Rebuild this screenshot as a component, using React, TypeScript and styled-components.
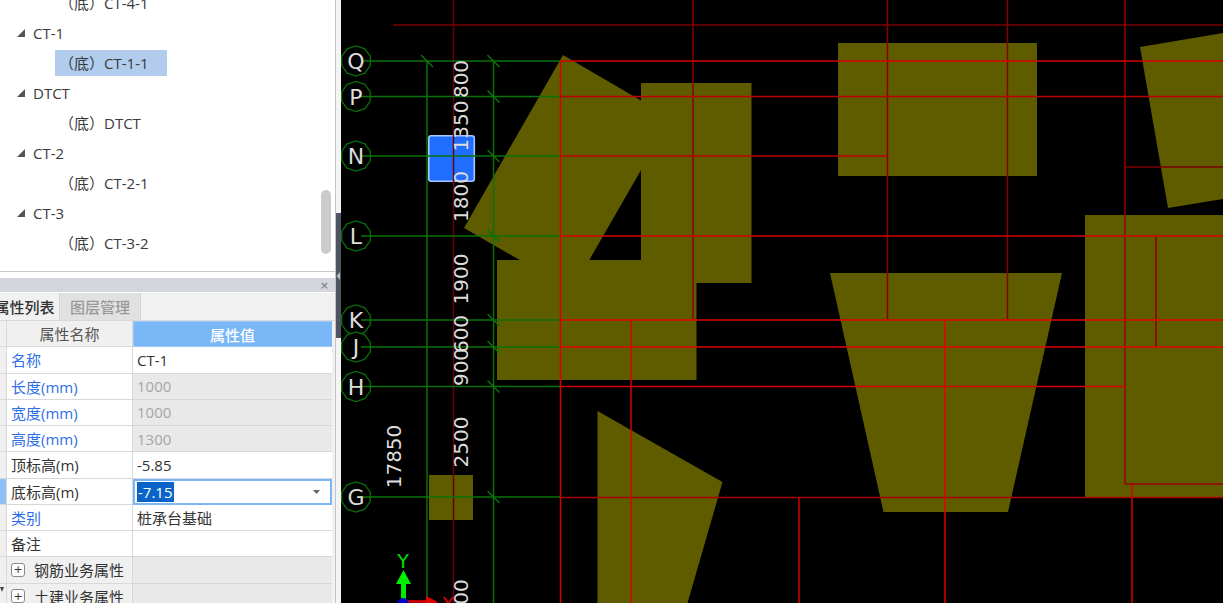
import React from "react";
import styled, { createGlobalStyle } from "styled-components";

const Global = createGlobalStyle`
  html, body { margin: 0; padding: 0; height: 100%; overflow: hidden; background: #fff; }
  #root { height: 100%; }
`;

const Page = styled.div`
  display: flex;
  width: 1223px;
  height: 603px;
  overflow: hidden;
  font-family: "Open Sans", "Noto Sans CJK SC", sans-serif;
  font-size: 15px;
  color: #333;
`;
const Side = styled.div`
  display: flex;
  flex-direction: column;
  flex: 0 0 336px;
  height: 603px;
  overflow: hidden;
  background: #fff;
  border-right: 1px solid #c4c4c4;
  box-sizing: border-box;
`;
const Tree = styled.div`
  position: relative;
  flex: 0 0 271px;
  overflow: hidden;
  border-bottom: 1px solid #c8c8c8;
`;
const TreeList = styled.div`
  margin-top: -12px;
`;
const TreeRow = styled.div<{ $child?: boolean }>`
  display: flex;
  align-items: center;
  height: 30px;
  padding-left: ${(p) => (p.$child ? 55 : 17)}px;
  line-height: 1;
  color: #3a3a3a;
`;
const Toggle = styled.svg`
  width: 8px;
  height: 8px;
  margin-right: 8px;
`;
const Leaf = styled.div<{ $sel?: boolean }>`
  display: flex;
  align-items: center;
  width: 112px;
  height: 26px;
  padding-left: 4px;
  box-sizing: border-box;
  background: ${(p) => (p.$sel ? "#b1cced" : "transparent")};
`;
const ScrollThumb = styled.div`
  position: absolute;
  left: 321px;
  top: 190px;
  width: 10px;
  height: 64px;
  border-radius: 5px;
  background: #cbcbcb;
`;
const Gap = styled.div`
  flex: 0 0 6px;
`;
const TitleBar = styled.div`
  display: flex;
  flex: 0 0 14px;
  align-items: center;
  justify-content: flex-end;
  padding-right: 6px;
  background: #d3d6dc;
  color: #777;
  font-family: "DejaVu Sans", sans-serif;
  font-size: 11px;
  line-height: 1;
`;
const Tabs = styled.div`
  display: flex;
  flex: 0 0 28px;
  margin-top: 1px;
  margin-left: -10px;
  background: #f1f1f1;
  border-bottom: 1px solid #d8d8d8;
  box-sizing: border-box;
`;
const Tab = styled.div<{ $on?: boolean }>`
  display: flex;
  align-items: center;
  justify-content: center;
  width: ${(p) => (p.$on ? 70 : 81)}px;
  background: ${(p) => (p.$on ? "#f1f1f1" : "#e1e1e1")};
  border-right: 1px solid #d4d4d4;
  box-sizing: border-box;
  color: ${(p) => (p.$on ? "#333" : "#999")};
  font-weight: 500;
`;
const Table = styled.div`
  display: grid;
  grid-template-columns: 7px 126px 199px;
  grid-auto-rows: 26.25px;
  width: 335px;
  background: #f1f1f1;
`;
const Gutter = styled.div<{ $on?: boolean }>`
  background: ${(p) => (p.$on ? "#8fc0f6" : "#f0f0f0")};
  border-right: 1px solid #d8d8d8;
  border-bottom: 1px solid #d8d8d8;
  box-sizing: border-box;
  overflow: hidden;
`;
const GutterMark = styled.svg`
  display: block;
  width: 4px;
  height: 6px;
  margin-top: 3px;
`;
const HeadName = styled.div`
  display: flex;
  align-items: center;
  justify-content: center;
  background: #f0f0f0;
  border-right: 1px solid #d8d8d8;
  border-bottom: 1px solid #d8d8d8;
  box-sizing: border-box;
  color: #555;
`;
const HeadValue = styled.div`
  display: flex;
  align-items: center;
  justify-content: center;
  background: #7ab7f6;
  border: 1px solid #9ac8f8;
  border-right: 1px solid #7ab7f6;
  box-sizing: border-box;
  color: #fff;
  font-weight: 500;
`;
const NameCell = styled.div<{ $blue?: boolean; $group?: boolean }>`
  display: flex;
  align-items: center;
  padding-left: 4px;
  background: ${(p) => (p.$group ? "#f0f0f0" : "#fff")};
  border-right: 1px solid #d8d8d8;
  border-bottom: 1px solid #d8d8d8;
  box-sizing: border-box;
  color: ${(p) => (p.$blue ? "#2f6fe6" : "#333")};
  white-space: nowrap;
`;
const ValueCell = styled.div<{ $off?: boolean }>`
  display: flex;
  align-items: center;
  padding-left: 4px;
  background: ${(p) => (p.$off ? "#e9e9e9" : "#fff")};
  border-bottom: 1px solid #d8d8d8;
  box-sizing: border-box;
  color: ${(p) => (p.$off ? "#a6a6a6" : "#333")};
`;
const EditCell = styled.div`
  display: flex;
  align-items: center;
  justify-content: space-between;
  padding: 0 10px 0 2px;
  background: #fff;
  border: 2px solid #7ab7f6;
  box-sizing: border-box;
`;
const Selected = styled.span`
  padding: 0 1px;
  background: #0a64c8;
  color: #fff;
  line-height: 20px;
`;
const Caret = styled.svg`
  width: 7px;
  height: 4px;
`;
const PlusBox = styled.span`
  display: inline-flex;
  align-items: center;
  justify-content: center;
  width: 14px;
  height: 14px;
  margin-right: 9px;
  border: 1px solid #8a8a8a;
  border-radius: 3px;
  box-sizing: border-box;
  background: #fff;
  color: #333;
  font-family: "DejaVu Sans", sans-serif;
  font-size: 11px;
  line-height: 1;
`;
const Splitter = styled.div`
  flex: 0 0 5px;
  background: #f4f4f4;
`;
const Handle = styled.div`
  display: flex;
  align-items: center;
  height: 125px;
  margin-top: 213px;
  background: #4c5561;
`;
const HandleMark = styled.svg`
  width: 5px;
  height: 10px;
`;
const Canvas = styled.div`
  flex: 1;
  min-width: 0;
  background: #000;
`;
const Drawing = styled.svg`
  display: block;
  width: 882px;
  height: 603px;
`;
const Slab = styled.polygon`
  fill: #5f5c00;
`;
const Marker = styled.rect`
  fill: #1f6eff;
  stroke: #a6c6ff;
  stroke-width: 1.6;
`;
const Line = styled.line<{ $tone: string }>`
  stroke: ${(p) => p.$tone};
  stroke-width: 1.5;
`;
const Bubble = styled.polygon`
  fill: #000;
  stroke: #0a6e0a;
  stroke-width: 1.3;
`;
const AxisLabel = styled.text`
  fill: #dcdcdc;
  font-family: "DejaVu Sans", sans-serif;
  font-size: 22px;
  text-anchor: middle;
`;
const Dim = styled.text`
  fill: #dcdcdc;
  font-family: "DejaVu Sans", sans-serif;
  font-size: 20px;
  text-anchor: middle;
`;
const GizmoLetter = styled.text<{ $c: string }>`
  fill: ${(p) => p.$c};
  font-family: "DejaVu Sans", sans-serif;
  font-size: 19px;
  text-anchor: middle;
`;

const slabs = [
  "563,55 671,118 572,290 464,228",
  "641,83 751.5,83 751.5,283 696.5,283 696.5,380 497,380 497,260 641,260",
  "838,43 1037,43 1037,176 838,176",
  "830,273 1062,273 1008,512 883.5,512",
  "597.5,411 722.5,482 687.5,603 597.5,603",
  "1140,47 1223,33 1223,199 1168,208",
  "1085,215 1223,215 1223,498 1085,498",
  "429,475 473,475 473,520 429,520",
];

const axes: [string, number][] = [
  ["Q", 61], ["P", 96.5], ["N", 156], ["L", 236],
  ["K", 320], ["J", 347], ["H", 386.5], ["G", 497],
];

const BRIGHT = "#d60000";
const DARK = "#8a0000";
const GREEN = "#0a720a";

// x1, y1, x2, y2, colour
const reds: [number, number, number, number, string][] = [
  [393, 25, 1223, 25, "#780000"],
  [453.5, 0, 453.5, 603, "#6c0000"],
  [693, 0, 693, 320, DARK],
  [887.5, 0, 887.5, 320, DARK],
  [1007.5, 0, 1007.5, 320, DARK],
  [1125, 0, 1125, 484, "#980000"],
  [1156, 236, 1156, 347, DARK],
  [560.5, 61, 560.5, 603, BRIGHT],
  [631, 320, 631, 603, BRIGHT],
  [945, 320, 945, 603, "#e40000"],
  [799, 497, 799, 603, BRIGHT],
  [1132, 484, 1132, 603, BRIGHT],
  [560, 61, 1223, 61, BRIGHT],
  [560, 96.5, 1223, 96.5, "#bc0000"],
  [560, 156, 887.5, 156, "#bc0000"],
  [560, 236, 1223, 236, BRIGHT],
  [560, 320, 1223, 320, "#e40000"],
  [560, 347, 1223, 347, "#e40000"],
  [560, 386.5, 1125, 386.5, BRIGHT],
  [560, 497.5, 1223, 497.5, "#aa0000"],
  [1125, 484, 1223, 484, "#980000"],
  [1125, 167, 1223, 167, "#780000"],
];

const dims: [string, number, number][] = [
  ["800", 461, 79],
  ["1350", 461, 126],
  ["1800", 461, 196.5],
  ["1900", 461, 279],
  ["600", 461, 334],
  ["900", 461, 367],
  ["2500", 461, 442],
  ["17850", 394, 456.5],
];

const decagon = (cx: number, cy: number, r: number) =>
  Array.from({ length: 10 }, (_, i) => {
    const a = (Math.PI / 5) * i + Math.PI / 10;
    return `${(cx + r * Math.cos(a)).toFixed(1)},${(cy + r * Math.sin(a)).toFixed(1)}`;
  }).join(" ");

const tree: [string, string, boolean][] = [
  ["CT-1", "CT-1-1", true],
  ["DTCT", "DTCT", false],
  ["CT-2", "CT-2-1", false],
  ["CT-3", "CT-3-2", false],
];

const rows: { name: string; value: string; blue?: boolean; off?: boolean }[] = [
  { name: "名称", value: "CT-1", blue: true },
  { name: "长度(mm)", value: "1000", blue: true, off: true },
  { name: "宽度(mm)", value: "1000", blue: true, off: true },
  { name: "高度(mm)", value: "1300", blue: true, off: true },
  { name: "顶标高(m)", value: "-5.85" },
];

const Triangle = () => (
  <Toggle viewBox="0 0 8 8">
    <polygon points="8,0 8,8 0,8" fill="#555" />
  </Toggle>
);

export default function App() {
  return (
    <Page>
      <Global />
      <Side>
        <Tree>
          <TreeList>
            <TreeRow $child>
              <Leaf>（底）CT-4-1</Leaf>
            </TreeRow>
            {tree.map(([parent, child, sel]) => (
              <React.Fragment key={parent}>
                <TreeRow>
                  <Triangle />
                  {parent}
                </TreeRow>
                <TreeRow $child>
                  <Leaf $sel={sel}>（底）{child}</Leaf>
                </TreeRow>
              </React.Fragment>
            ))}
          </TreeList>
          <ScrollThumb />
        </Tree>
        <Gap />
        <TitleBar>×</TitleBar>
        <Tabs>
          <Tab $on>属性列表</Tab>
          <Tab>图层管理</Tab>
        </Tabs>
        <Table>
          <Gutter />
          <HeadName>属性名称</HeadName>
          <HeadValue>属性值</HeadValue>
          {rows.map((r) => (
            <React.Fragment key={r.name}>
              <Gutter />
              <NameCell $blue={r.blue}>{r.name}</NameCell>
              <ValueCell $off={r.off}>{r.value}</ValueCell>
            </React.Fragment>
          ))}
          <Gutter $on />
          <NameCell>底标高(m)</NameCell>
          <EditCell>
            <Selected>-7.15</Selected>
            <Caret viewBox="0 0 7 4">
              <polygon points="0,0 7,0 3.5,4" fill="#666" />
            </Caret>
          </EditCell>
          <Gutter />
          <NameCell $blue>类别</NameCell>
          <ValueCell>桩承台基础</ValueCell>
          <Gutter />
          <NameCell>备注</NameCell>
          <ValueCell />
          <Gutter />
          <NameCell $group><PlusBox>+</PlusBox>钢筋业务属性</NameCell>
          <ValueCell $off />
          <Gutter>
            <GutterMark viewBox="0 0 4 6">
              <polygon points="0,0 4,0 2,5" fill="#444" />
            </GutterMark>
          </Gutter>
          <NameCell $group><PlusBox>+</PlusBox>土建业务属性</NameCell>
          <ValueCell $off />
        </Table>
      </Side>
      <Splitter>
        <Handle>
          <HandleMark viewBox="0 0 5 10">
            <polygon points="4,1 4,9 0.5,5" fill="#b8bec6" />
          </HandleMark>
        </Handle>
      </Splitter>
      <Canvas>
        <Drawing viewBox="341 0 882 603">
          {slabs.map((p) => (
            <Slab key={p} points={p} />
          ))}
          <Marker x={428.8} y={135.8} width={45.5} height={45.5} rx={2.5} />
          {reds.map(([x1, y1, x2, y2, c]) => (
            <Line key={`${x1}-${y1}-${x2}-${y2}`} x1={x1} y1={y1} x2={x2} y2={y2} $tone={c} />
          ))}
          <Line x1={427} y1={61} x2={427} y2={603} $tone={GREEN} />
          <Line x1={493.5} y1={61} x2={493.5} y2={603} $tone={GREEN} />
          <Line x1={421} y1={55} x2={433} y2={67} $tone={GREEN} />
          {axes.map(([name, y]) => (
            <React.Fragment key={name}>
              <Bubble points={decagon(356, y, 15)} />
              <Line x1={361} y1={y} x2={560} y2={y} $tone={GREEN} />
              <Line x1={487.5} y1={y - 6} x2={499.5} y2={y + 6} $tone={GREEN} />
              <AxisLabel x={356} y={y + 8}>{name}</AxisLabel>
            </React.Fragment>
          ))}
          {dims.map(([t, x, y]) => (
            <Dim key={t} x={x} y={y} dy={7} transform={`rotate(-90 ${x} ${y})`}>{t}</Dim>
          ))}
          <Dim x={461} y={592} dy={7} transform="rotate(-90 461 592)">00</Dim>
          <GizmoLetter $c="#00e000" x={403} y={568}>Y</GizmoLetter>
          <polygon points="403.5,570 411,584 406,584 406,600 401,600 401,584 396,584" fill="#00ee00" />
          <line x1={403} y1={601.5} x2={428} y2={601.5} stroke="#e00000" strokeWidth={2.5} />
          <polygon points="426,596 438,602 426,608" fill="#e00000" />
          <GizmoLetter $c="#e00000" x={448} y={611}>X</GizmoLetter>
          <circle cx={403} cy={604} r={6} fill="#0000c8" />
        </Drawing>
      </Canvas>
    </Page>
  );
}
